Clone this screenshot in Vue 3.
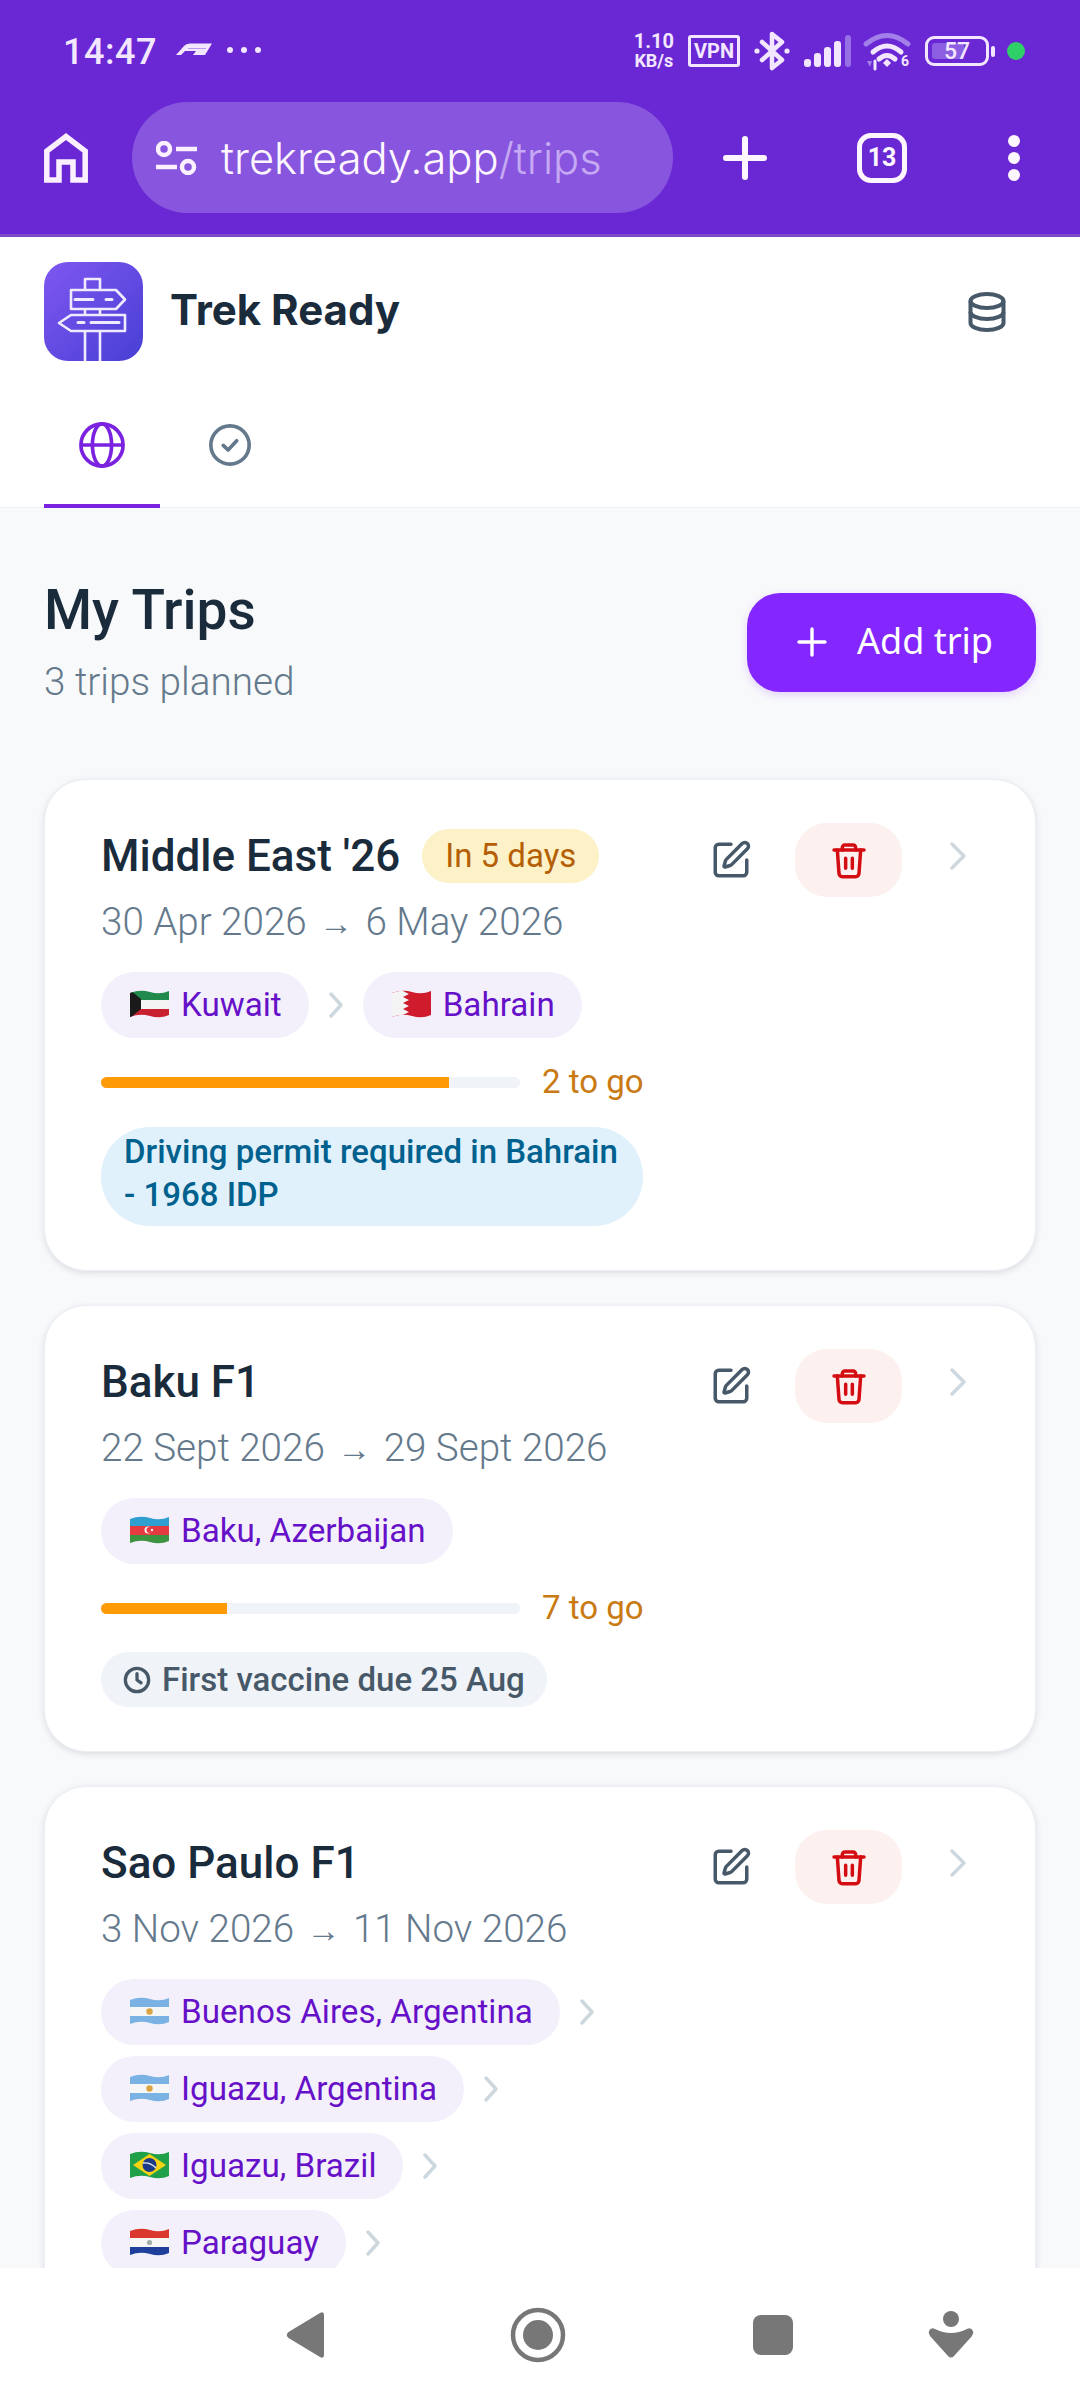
<script setup>
const flags = {
  kw: [
    { tag: 'rect', x: 0, y: 0, width: 39, height: 10, fill: '#1f8a4c' },
    { tag: 'rect', x: 0, y: 10, width: 39, height: 9, fill: '#f4f4f4' },
    { tag: 'rect', x: 0, y: 19, width: 39, height: 9, fill: '#c8202f' },
    { tag: 'polygon', points: '0,0 11,9 11,19 0,28', fill: '#1a1a1a' }
  ],
  bh: [
    { tag: 'rect', x: 0, y: 0, width: 39, height: 28, fill: '#cf1b2b' },
    { tag: 'polygon', points: '0,0 11,1 17,4 11,7 17,10 11,13 17,16 11,19 17,22 11,25 0,28', fill: '#f4f4f4' }
  ],
  az: [
    { tag: 'rect', x: 0, y: 0, width: 39, height: 10, fill: '#2f9fd0' },
    { tag: 'rect', x: 0, y: 10, width: 39, height: 9, fill: '#e53a3f' },
    { tag: 'rect', x: 0, y: 19, width: 39, height: 9, fill: '#3d9440' },
    { tag: 'circle', cx: 18, cy: 14, r: 3.5, fill: '#f4f4f4' },
    { tag: 'circle', cx: 19.5, cy: 14, r: 3, fill: '#e53a3f' },
    { tag: 'circle', cx: 22, cy: 14, r: 1.2, fill: '#f4f4f4' }
  ],
  ar: [
    { tag: 'rect', x: 0, y: 0, width: 39, height: 10, fill: '#79b2e3' },
    { tag: 'rect', x: 0, y: 10, width: 39, height: 9, fill: '#f6f6f6' },
    { tag: 'rect', x: 0, y: 19, width: 39, height: 9, fill: '#79b2e3' },
    { tag: 'circle', cx: 19.5, cy: 14.5, r: 3.2, fill: '#d9a441' }
  ],
  br: [
    { tag: 'rect', x: 0, y: 0, width: 39, height: 28, fill: '#21a04a' },
    { tag: 'polygon', points: '19.5,3 36,14 19.5,25 3,14', fill: '#f6d313' },
    { tag: 'circle', cx: 19.5, cy: 14, r: 7, fill: '#1d3a86' },
    { tag: 'path', d: 'M13 12 Q20 11 26 17', stroke: '#e8eef5', 'stroke-width': 1.3, fill: 'none' }
  ],
  py: [
    { tag: 'rect', x: 0, y: 0, width: 39, height: 10, fill: '#d8392c' },
    { tag: 'rect', x: 0, y: 10, width: 39, height: 9, fill: '#f6f6f6' },
    { tag: 'rect', x: 0, y: 19, width: 39, height: 9, fill: '#1f3f9c' },
    { tag: 'circle', cx: 19.5, cy: 14.5, r: 2.6, fill: '#9fb0a8' }
  ]
}

const trips = [
  {
    id: 1,
    name: "Middle East '26",
    badge: 'In 5 days',
    from: '30 Apr 2026',
    to: '6 May 2026',
    stops: [
      { flag: 'kw', name: 'Kuwait' },
      { flag: 'bh', name: 'Bahrain' }
    ],
    done: 83,
    left: '2 to go',
    note: 'Driving permit required in Bahrain - 1968 IDP'
  },
  {
    id: 2,
    name: 'Baku F1',
    from: '22 Sept 2026',
    to: '29 Sept 2026',
    stops: [{ flag: 'az', name: 'Baku, Azerbaijan' }],
    done: 30,
    left: '7 to go',
    reminder: 'First vaccine due 25 Aug'
  },
  {
    id: 3,
    name: 'Sao Paulo F1',
    from: '3 Nov 2026',
    to: '11 Nov 2026',
    stops: [
      { flag: 'ar', name: 'Buenos Aires, Argentina' },
      { flag: 'ar', name: 'Iguazu, Argentina' },
      { flag: 'br', name: 'Iguazu, Brazil' },
      { flag: 'py', name: 'Paraguay' }
    ],
    more: true,
    done: 0,
    left: ''
  }
]
</script>

<template>
  <div class="screen">
    <div class="browser">
      <div class="status">
        <span class="time">14:47</span>
        <svg class="f1" viewBox="0 0 36 12" width="36" height="12">
          <path d="M0 12 L8 3 Q10 .5 14 .5 H36 L29 12 H17 L20 8 H9 L5 12 Z" fill="#f3e6ff" />
          <path d="M12 5.5 H30" stroke="#b99af0" stroke-width="1" />
        </svg>
        <span class="more"><i></i><i></i><i></i></span>
        <span class="status-right">
          <span class="speed"><b>1.10</b><b>KB/s</b></span>
          <span class="vpn">VPN</span>
          <svg class="bt" viewBox="0 0 36 40" width="36" height="40" fill="none" stroke="#f3e6ff" stroke-width="4.5" stroke-linecap="round" stroke-linejoin="round">
            <path d="M8 11 L28 29 L18 37 V3 L28 11 L8 29" />
            <circle cx="3" cy="20" r="2.6" fill="#f3e6ff" stroke="none" />
            <circle cx="33" cy="20" r="2.6" fill="#f3e6ff" stroke="none" />
          </svg>
          <svg class="signal" viewBox="0 0 47 32" width="47" height="32">
            <rect x="0" y="24" width="7" height="8" rx="3" fill="#f3e6ff" />
            <rect x="10" y="18" width="7" height="14" rx="3" fill="#f3e6ff" />
            <rect x="20" y="12" width="7" height="20" rx="3" fill="#f3e6ff" />
            <rect x="30" y="6" width="7" height="26" rx="3" fill="#f3e6ff" />
            <rect x="41" y="0" width="6" height="32" rx="3" fill="#9670e4" />
          </svg>
          <svg class="wifi" viewBox="0 0 46 36" width="46" height="36" fill="none" stroke-linecap="round">
            <path d="M2 11 Q23 -6 44 11" stroke="#a27fe9" stroke-width="5" />
            <path d="M9 19 Q23 7 37 19" stroke="#f3e6ff" stroke-width="5" />
            <path d="M15 26 Q23 19 31 26" stroke="#f3e6ff" stroke-width="5" />
            <path d="M19 30 L23 26 L27 30 L23 34 Z" fill="#f3e6ff" />
            <path d="M3 28 L6 34 L8 28 Z" fill="#a27fe9" />
            <path d="M11 36 V28" stroke="#f3e6ff" stroke-width="3" />
            <text x="37" y="33" class="wifi-six">6</text>
          </svg>
          <span class="battery">
            <span class="battery-body"><span class="battery-fill"></span><span class="battery-num">57</span></span>
            <span class="battery-nub"></span>
          </span>
          <span class="green-dot"></span>
        </span>
      </div>
      <div class="toolbar">
        <svg class="home" viewBox="0 0 44 50" width="44" height="50" fill="none" stroke="#fbf0ff" stroke-width="5.5">
          <path d="M2.8 47 V18 L22 3.5 L41.2 18 V47 H29 V29 H15 V47 Z" />
        </svg>
        <div class="url">
          <svg viewBox="0 0 41 34" width="41" height="34" fill="none" stroke="#fbf0ff" stroke-width="4.5">
            <circle cx="8" cy="8" r="6" />
            <path d="M20 8 H41 M0 26 H21" />
            <circle cx="32" cy="26" r="6" />
          </svg>
          <span class="url-text">trekready.app<span class="url-path">/trips</span></span>
        </div>
        <svg class="add" viewBox="0 0 44 44" width="44" height="44" stroke="#fdf6ff" stroke-width="6" stroke-linecap="round">
          <path d="M22 3 V41 M3 22 H41" />
        </svg>
        <span class="tabs-count">13</span>
        <span class="menu"><i></i><i></i><i></i></span>
      </div>
    </div>

    <div class="app">
      <header class="head">
        <div class="brand">
          <div class="logo">
            <svg viewBox="0 0 99 99" width="99" height="99" fill="none" stroke="#efeafd" stroke-width="2.6" stroke-linejoin="round">
              <path d="M41 28 V17 H56 V28" />
              <path d="M27 28 H72 L81 37.5 L72 47 H27 Z" />
              <path d="M41 47 V53 M56 47 V53" />
              <path d="M81 53 H27 L15 61 L27 69 H81 Z" />
              <path d="M41 69 V99 M56 69 V99" />
              <path d="M31 37.5 H49 M62 37.5 H68 M34 60.5 H40 M47 60.5 H75" stroke-linecap="round" stroke-width="3" />
            </svg>
          </div>
          <span class="brand-name">Trek Ready</span>
          <svg class="db" viewBox="0 0 38 40" width="38" height="40" fill="none" stroke="#475969" stroke-width="4">
            <ellipse cx="19" cy="9" rx="16.5" ry="7" />
            <path d="M2.5 9 V31 A16.5 7 0 0 0 35.5 31 V9" />
            <path d="M2.5 20 A16.5 7 0 0 0 35.5 20" />
          </svg>
        </div>
        <nav class="tabs">
          <div class="tab active">
            <svg viewBox="0 0 24 24" width="46" height="46" fill="none" stroke="#7a22e0" stroke-width="1.9">
              <circle cx="12" cy="12" r="11" />
              <ellipse cx="12" cy="12" rx="5" ry="11" />
              <path d="M1 12 H23" />
            </svg>
          </div>
          <div class="tab">
            <svg viewBox="0 0 24 24" width="46" height="46" fill="none" stroke="#64798c" stroke-width="1.9" stroke-linecap="round" stroke-linejoin="round">
              <circle cx="12" cy="12" r="10" />
              <path d="M8.5 12.2 L11 14.6 L15.5 9.8" />
            </svg>
          </div>
        </nav>
      </header>

      <main class="page">
        <div class="page-top">
          <div>
            <h1>My Trips</h1>
            <p class="sub">3 trips planned</p>
          </div>
          <button class="add-trip">
            <svg viewBox="0 0 30 30" width="30" height="30" stroke="#fff" stroke-width="3.4" stroke-linecap="round">
              <path d="M15 2 V28 M2 15 H28" />
            </svg>
            <span>Add trip</span>
          </button>
        </div>

        <section v-for="trip in trips" :key="trip.id" class="card">
          <div class="info">
            <div class="title-row">
              <h2>{{ trip.name }}</h2>
              <span v-if="trip.badge" class="badge">{{ trip.badge }}</span>
            </div>
            <p class="dates">{{ trip.from }} <span class="arrow">→</span> {{ trip.to }}</p>
            <div class="stops">
              <div v-for="(stop, i) in trip.stops" :key="i" class="stop">
                <span class="chip">
                  <svg viewBox="0 0 39 28" width="39" height="28">
                    <clipPath :id="'wave' + trip.id + i">
                      <path d="M0 3 Q10 -1 20 2 T39 1 V25 Q30 29 20 26 T0 27 Z" />
                    </clipPath>
                    <g :clip-path="'url(#wave' + trip.id + i + ')'">
                      <component :is="s.tag" v-for="(s, n) in flags[stop.flag]" :key="n" v-bind="s" />
                    </g>
                  </svg>
                  {{ stop.name }}
                </span>
                <svg v-if="trip.more || i < trip.stops.length - 1" class="stop-next" viewBox="0 0 14 26" width="14" height="26" fill="none" stroke="#cdd7de" stroke-width="3.4" stroke-linecap="round" stroke-linejoin="round">
                  <path d="M2 2 L12 13 L2 24" />
                </svg>
              </div>
            </div>
            <div v-if="trip.left" class="progress">
              <div class="track"><div class="fill" :style="{ width: trip.done + '%' }"></div></div>
              <span class="left">{{ trip.left }}</span>
            </div>
            <div v-if="trip.note" class="note">{{ trip.note }}</div>
            <div v-if="trip.reminder" class="reminder">
              <svg viewBox="0 0 24 24" width="28" height="28" fill="none" stroke="#475969" stroke-width="2.8" stroke-linecap="round" stroke-linejoin="round">
                <circle cx="12" cy="12" r="10" />
                <path d="M12 6.5 V12 L15.5 14.5" />
              </svg>
              {{ trip.reminder }}
            </div>
          </div>
          <div class="actions">
            <svg viewBox="0 0 24 24" width="42" height="42" fill="none" stroke="#475969" stroke-width="2" stroke-linecap="round" stroke-linejoin="round">
              <path d="M12 3H5a2 2 0 0 0-2 2v14a2 2 0 0 0 2 2h14a2 2 0 0 0 2-2v-7" />
              <path d="M18.375 2.625a1 1 0 0 1 3 3l-9.013 9.014a2 2 0 0 1-.853.505l-2.873.84a.5.5 0 0 1-.62-.62l.84-2.873a2 2 0 0 1 .506-.852z" />
            </svg>
            <span class="delete">
              <svg viewBox="0 0 24 24" width="40" height="40" fill="none" stroke="#d40d12" stroke-width="2.1" stroke-linecap="round" stroke-linejoin="round">
                <path d="M3 6h18" />
                <path d="M8 6V4.5A1.5 1.5 0 0 1 9.5 3h5A1.5 1.5 0 0 1 16 4.5V6" />
                <path d="M5 6l1 14a2 2 0 0 0 2 2h8a2 2 0 0 0 2-2l1-14" />
                <path d="M10 11v6M14 11v6" />
              </svg>
            </span>
            <svg class="open" viewBox="0 0 16 28" width="16" height="28" fill="none" stroke="#cdd7de" stroke-width="3.4" stroke-linecap="round" stroke-linejoin="round">
              <path d="M2 2 L14 14 L2 26" />
            </svg>
          </div>
        </section>
      </main>
    </div>

    <div class="sysnav">
      <svg viewBox="0 0 60 60" width="60" height="60" fill="#777">
        <path d="M15.5 27 L47 8 Q51 6 51 10 V50 Q51 54 47 52 L15.5 33 Q12 30 15.5 27 Z" />
      </svg>
      <svg viewBox="0 0 60 60" width="60" height="60">
        <circle cx="30" cy="30" r="25" fill="none" stroke="#777" stroke-width="4.5" />
        <circle cx="30" cy="30" r="15" fill="#777" />
      </svg>
      <svg viewBox="0 0 60 60" width="60" height="60" fill="#777">
        <rect x="10" y="10" width="40" height="40" rx="8" />
      </svg>
      <svg viewBox="0 0 60 60" width="60" height="60" fill="#777">
        <circle cx="30" cy="14" r="8" />
        <path d="M8 26 Q10 22 14 24 Q30 32 46 24 Q50 22 52 26 Q53 28 51 31 L33 51 Q30 54 27 51 L9 31 Q7 28 8 26 Z" />
      </svg>
    </div>
  </div>
</template>

<style scoped>
.screen {
  width: 1080px;
  height: 2400px;
  display: flex;
  flex-direction: column;
  overflow: hidden;
  background: #f8f9fb;
  font-family: Roboto, "Noto Sans", sans-serif;
  color: #1a2b3c;
}

.browser {
  flex: none;
  height: 237px;
  box-sizing: border-box;
  background: #6a28d4;
  border-bottom: 3px solid #7c4bc9;
}

.status {
  display: flex;
  align-items: center;
  height: 102px;
  padding: 0 55px 0 63px;
  box-sizing: border-box;
  color: #f3e6ff;
}
.time {
  font-size: 36px;
  font-weight: 500;
  letter-spacing: 0.5px;
  margin: 2px 19px 0 0;
}
.f1 {
  margin-top: -4px;
}
.more {
  display: flex;
  gap: 8px;
  margin-left: 15px;
  margin-top: -2px;
}
.more i {
  width: 6px;
  height: 6px;
  border-radius: 50%;
  background: #f3e6ff;
}
.status-right {
  margin-left: auto;
  display: flex;
  align-items: center;
}
.speed {
  display: flex;
  flex-direction: column;
  align-items: center;
  font-size: 20px;
  line-height: 20px;
  margin-right: 14px;
}
.speed b {
  font-weight: 700;
}
.speed b + b {
  font-size: 18px;
}
.vpn {
  border: 3.5px solid #f3e6ff;
  border-radius: 3px;
  font-size: 20px;
  font-weight: 700;
  line-height: 26px;
  padding: 0 3px;
  margin-right: 14px;
}
.bt {
  margin-right: 14px;
}
.signal {
  margin-right: 13px;
}
.wifi {
  margin-right: 15px;
  overflow: visible;
}
.wifi-six {
  font-size: 14px;
  font-weight: 700;
  fill: #f3e6ff;
  stroke: none;
}
.battery {
  display: flex;
  align-items: center;
  gap: 2px;
}
.battery-body {
  position: relative;
  width: 64px;
  height: 30px;
  box-sizing: border-box;
  border: 3px solid #f3e6ff;
  border-radius: 9px;
  display: flex;
  align-items: center;
  justify-content: center;
}
.battery-fill {
  position: absolute;
  left: 4px;
  top: 4px;
  bottom: 4px;
  width: 32px;
  border-radius: 3px;
  background: #8c5fe2;
}
.battery-num {
  position: relative;
  font-size: 23px;
  font-weight: 500;
}
.battery-nub {
  width: 4px;
  height: 11px;
  border-radius: 2px;
  background: #f3e6ff;
}
.green-dot {
  width: 18px;
  height: 18px;
  border-radius: 50%;
  background: #2fd06a;
  margin-left: 12px;
}

.toolbar {
  display: flex;
  align-items: center;
  height: 111px;
  padding-left: 44px;
}
.url {
  width: 541px;
  height: 111px;
  box-sizing: border-box;
  margin-left: 44px;
  padding-left: 24px;
  border-radius: 56px;
  background: #8855de;
  display: flex;
  align-items: center;
  gap: 24px;
}
.url-text {
  font-family: Inter, sans-serif;
  font-size: 43.5px;
  font-weight: 300;
  color: #fdf6ff;
}
.url-path {
  color: #c6a9f3;
}
.add {
  margin-left: 50px;
}
.tabs-count {
  width: 50px;
  height: 50px;
  box-sizing: border-box;
  margin-left: 90px;
  border: 5.5px solid #fdf6ff;
  border-radius: 14px;
  color: #fdf6ff;
  font-size: 25px;
  font-weight: 700;
  display: flex;
  align-items: center;
  justify-content: center;
}
.menu {
  display: flex;
  flex-direction: column;
  gap: 5px;
  margin-left: 101px;
}
.menu i {
  width: 12px;
  height: 12px;
  border-radius: 50%;
  background: #fdf6ff;
}

.app {
  flex: 1;
  min-height: 0;
  overflow: hidden;
}
.head {
  background: #fff;
  border-bottom: 1px solid #eef0f4;
}
.brand {
  display: flex;
  align-items: center;
  padding: 25px 44px 0;
}
.logo {
  width: 99px;
  height: 99px;
  border-radius: 24px;
  overflow: hidden;
  background: linear-gradient(135deg, #7f57f1, #483fd4);
  flex: none;
}
.logo svg {
  display: block;
}
.brand-name {
  margin: 0 0 4px 27px;
  font-family: Inter, sans-serif;
  font-size: 42px;
  font-weight: 700;
}
.db {
  margin-left: auto;
  margin-right: 30px;
}
.tabs {
  display: flex;
  gap: 12px;
  padding-left: 44px;
  margin-bottom: -1px;
}
.tab {
  width: 116px;
  height: 147px;
  box-sizing: border-box;
  padding-top: 61px;
  border-bottom: 4px solid transparent;
  display: flex;
  justify-content: center;
}
.tab svg {
  display: block;
}
.tab.active {
  border-bottom-color: #7a22e0;
}

.page {
  padding: 72px 44px 0;
}
.page-top {
  display: flex;
  align-items: center;
  justify-content: space-between;
  margin-bottom: 75px;
}
h1 {
  margin: 0;
  font-size: 55px;
  line-height: 60px;
  font-weight: 500;
}
.sub {
  margin: 20px 0 0;
  font-size: 38.7px;
  line-height: 44px;
  font-weight: 300;
  color: #64798c;
}
.add-trip {
  width: 289px;
  height: 99px;
  border: none;
  padding: 0 0 0 50px;
  border-radius: 33px;
  background: #8427ff;
  box-shadow: 0 3px 8px rgba(132, 39, 255, 0.18);
  color: #fff;
  font-family: "Noto Sans", sans-serif;
  font-size: 36px;
  display: flex;
  align-items: center;
  gap: 30px;
}
.add-trip span {
  margin-bottom: 4px;
}

.card {
  display: flex;
  align-items: flex-start;
  padding: 43px 57px 44px 56px;
  margin-bottom: 34px;
  background: #fff;
  border: 1px solid #eceff3;
  border-radius: 42px;
  box-shadow: 0 2px 6px rgba(40, 50, 70, 0.14);
}
.info {
  width: 542px;
  flex: none;
  padding-top: 6px;
}
.title-row {
  display: flex;
  align-items: center;
  height: 54px;
  gap: 23px;
}
h2 {
  margin: 0;
  font-size: 44px;
  font-weight: 500;
}
.badge {
  height: 54px;
  padding: 0 23px;
  border-radius: 27px;
  background: #fdf1c7;
  color: #b45f06;
  font-size: 33px;
  line-height: 54px;
  margin-left: -1px;
}
.dates {
  margin: 17px 0 0;
  font-size: 38.6px;
  line-height: 44px;
  font-weight: 300;
  color: #64798c;
  white-space: nowrap;
}
.arrow {
  font-size: 34px;
  line-height: 0;
  margin: 0 3px;
}
.stops {
  display: flex;
  flex-wrap: wrap;
  gap: 11px 20px;
  margin-top: 28px;
}
.stop {
  display: flex;
  align-items: center;
  gap: 20px;
}
.chip {
  height: 66px;
  box-sizing: border-box;
  padding: 0 27px 2px 29px;
  border-radius: 33px;
  background: #f3f0fc;
  color: #6610c8;
  font-size: 33.2px;
  display: flex;
  align-items: center;
  gap: 12px;
}
.progress {
  display: flex;
  align-items: center;
  gap: 22px;
  height: 40px;
  margin-top: 24px;
}
.track {
  width: 419px;
  height: 11px;
  flex: none;
  border-radius: 6px;
  background: #f0f3f7;
  overflow: hidden;
}
.fill {
  height: 100%;
  background: #ff9a07;
}
.left {
  font-size: 33px;
  color: #c97a12;
  white-space: nowrap;
  margin-top: -2px;
}
.note {
  margin-top: 25px;
  padding: 3px 23px 10px;
  border-radius: 49px;
  background: #e1f1fb;
  color: #00618f;
  font-size: 33px;
  line-height: 43px;
  font-weight: 500;
}
.reminder {
  display: inline-flex;
  align-items: center;
  gap: 11px;
  height: 55px;
  margin-top: 24px;
  padding: 0 22px;
  border-radius: 28px;
  background: #f0f3f7;
  color: #475969;
  font-size: 33px;
  font-weight: 500;
}
.actions {
  display: flex;
  align-items: center;
  margin-left: auto;
  margin-right: 12px;
}
.delete {
  width: 107px;
  height: 74px;
  margin: 0 48px 0 43px;
  border-radius: 32px;
  background: #fdf1ef;
  display: flex;
  align-items: center;
  justify-content: center;
}
.open {
  margin-top: -8px;
}

.sysnav {
  flex: none;
  height: 132px;
  box-sizing: border-box;
  padding: 37px 0 0 273px;
  background: #fff;
  display: grid;
  grid-template-columns: 235px 235px 178px 60px;
  align-items: start;
}
</style>

<style>
html,
body {
  margin: 0;
  background: #f8f9fb;
}
</style>
